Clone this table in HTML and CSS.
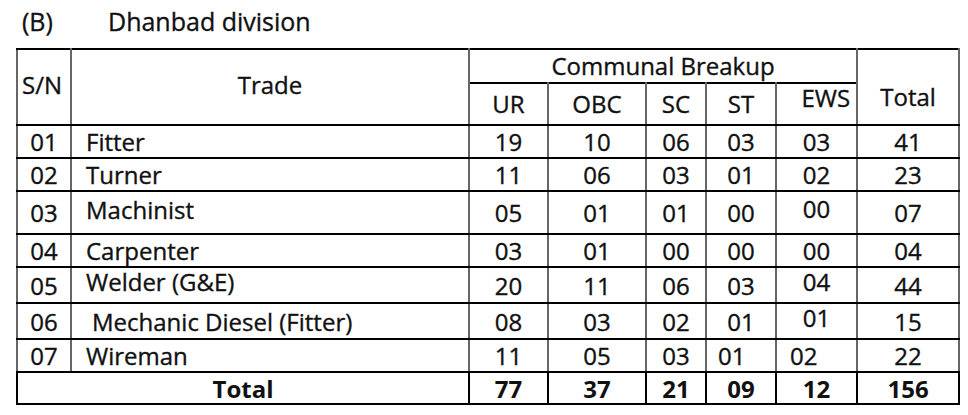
FILE: index.html
```html
<!DOCTYPE html>
<html>
<head>
<meta charset="utf-8">
<link rel="stylesheet" href="styles.css">
</head>
<body>
<div class="page">
  <h2 class="title"><span class="tag">(B)</span><span>Dhanbad division</span></h2>
  <table class="grid">
    <colgroup>
      <col class="c-sn"><col class="c-trade"><col class="c-ur"><col class="c-obc"><col class="c-sc"><col class="c-st"><col class="c-ews"><col class="c-total">
    </colgroup>
    <thead>
      <tr class="h1">
        <th rowspan="2" class="sn-h">S/N</th>
        <th rowspan="2" class="trade-h">Trade</th>
        <th colspan="5" class="cb">Communal Breakup</th>
        <th rowspan="2" class="total-h">Total</th>
      </tr>
      <tr class="h2">
        <th>UR</th><th>OBC</th><th>SC</th><th>ST</th><th class="ews-h">EWS</th>
      </tr>
    </thead>
    <tbody>
      <tr class="r33"><td class="sn">01</td><td class="tr">Fitter</td><td>19</td><td>10</td><td>06</td><td>03</td><td>03</td><td>41</td></tr>
      <tr class="r33"><td class="sn">02</td><td class="tr">Turner</td><td>11</td><td>06</td><td>03</td><td>01</td><td>02</td><td>23</td></tr>
      <tr class="r43"><td class="sn">03</td><td class="tr top">Machinist</td><td>05</td><td>01</td><td>01</td><td>00</td><td class="up">00</td><td>07</td></tr>
      <tr class="r33"><td class="sn">04</td><td class="tr">Carpenter</td><td>03</td><td>01</td><td>00</td><td>00</td><td>00</td><td>04</td></tr>
      <tr class="r36"><td class="sn">05</td><td class="tr up">Welder (G&amp;E)</td><td>20</td><td>11</td><td>06</td><td>03</td><td class="up">04</td><td>44</td></tr>
      <tr class="r36"><td class="sn">06</td><td class="tr indent">Mechanic Diesel (Fitter)</td><td>08</td><td>03</td><td>02</td><td>01</td><td class="up">01</td><td>15</td></tr>
      <tr class="r33"><td class="sn">07</td><td class="tr">Wireman</td><td>11</td><td>05</td><td>03</td><td class="shl">01</td><td class="shl2">02</td><td>22</td></tr>
      <tr class="r32 sum"><td colspan="2">Total</td><td>77</td><td>37</td><td>21</td><td>09</td><td>12</td><td>156</td></tr>
    </tbody>
  </table>
</div>
</body>
</html>
```
FILE: styles.css
```css
html, body {
  margin: 0;
  padding: 0;
  background: #ffffff;
}

.page {
  padding: 0 0 0 16px;
  font-family: "Open Sans", "Lato", sans-serif;
  color: #111;
  -webkit-text-stroke: 0.35px #111;
}

.title {
  margin: 0;
  height: 48px;
  padding: 4px 0 0 6px;
  box-sizing: border-box;
  font-size: 25px;
  font-weight: 400;
  display: flex;
}

.title .tag {
  width: 86px;
}

.grid {
  border-collapse: collapse;
  table-layout: fixed;
  width: 942px;
  font-size: 24px;
  border: 2px solid #000;
}

.c-sn { width: 54px; }
.c-trade { width: 398px; }
.c-ur { width: 79px; }
.c-obc { width: 98px; }
.c-sc { width: 60px; }
.c-st { width: 70px; }
.c-ews { width: 81px; }
.c-total { width: 102px; }

.grid th, .grid td {
  border-top: 2px solid #000;
  border-bottom: 2px solid #000;
  border-left: 2px solid #666;
  border-right: 2px solid #666;
  padding: 0;
  text-align: center;
  vertical-align: middle;
  font-weight: 400;
  line-height: 1;
}

.grid th {
  font-weight: 400;
  font-size: 24px;
}

.h1 { height: 34px; }
.h2 { height: 42px; }

.cb {
  border-bottom: 1px solid #000 !important;
  vertical-align: bottom !important;
  padding-bottom: 4px !important;
}

.sn-h {
  text-align: left !important;
  padding-left: 4px !important;
  padding-bottom: 4px !important;
}

.trade-h {
  padding-bottom: 4px !important;
}

.total-h {
  padding-top: 20px !important;
}

.ews-h {
  text-align: right !important;
  padding-right: 6px !important;
  padding-bottom: 12px !important;
}

.r33 { height: 33px; }
.r43 { height: 43px; }
.r36 { height: 36px; }
.r32 { height: 32px; }

.grid td {
  padding-top: 1px;
}

.grid td.tr {
  text-align: left;
  padding-left: 14px;
}

.grid td.indent {
  padding-left: 20px;
}

.grid td.top {
  vertical-align: top;
  padding-top: 6px;
}

.grid td.up {
  padding-bottom: 7px;
  padding-top: 0;
}

.grid td.shl {
  text-align: left;
  padding-left: 11px;
}

.grid td.shl2 {
  text-align: left;
  padding-left: 13px;
}

.sum td {
  font-weight: 700;
  -webkit-text-stroke: 0;
  border-left-color: #000;
  border-right-color: #000;
}
```
